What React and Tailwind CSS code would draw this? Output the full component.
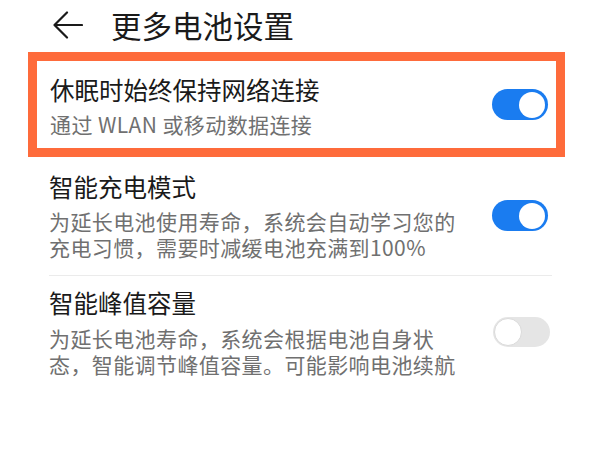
const font = { fontFamily: '"Noto Sans CJK SC", "Noto Sans", sans-serif' }

const Toggle = ({ on }) => {
    if (on) {
        return (
            <div className="w-[56px] h-[31px] rounded-full bg-[#1a7cf0] flex items-center justify-end pr-[3px] shrink-0">
                <div className="w-[26px] h-[26px] rounded-full bg-white"></div>
            </div>
        )
    }
    return (
        <div className="w-[57px] h-[30px] rounded-full bg-[#e5e5e5] flex items-center justify-start pl-[1px] shrink-0">
            <div className="w-[28px] h-[28px] rounded-full bg-white border border-[#dadada]"></div>
        </div>
    )
}

const App = () => {
    return (
        <div className="w-[600px] h-[450px] bg-white overflow-hidden" style={font}>
            {/* Header */}
            <div className="flex items-center h-[50px] pl-[52px]">
                <svg width="31" height="28" viewBox="0 0 31 28" fill="none">
                    <path d="M30 14H2.5M15 1.5L2.5 14L15 26.5" stroke="#1a1a1a" strokeWidth="2.2" strokeLinecap="round" strokeLinejoin="round" />
                </svg>
                <div className="ml-[28px] text-[30.5px] leading-[40px] text-[#1a1a1a]">更多电池设置</div>
            </div>

            {/* Highlighted row */}
            <div className="ml-[28px] mr-[35px] mt-[2px] border-[9px] border-[#fe6b3b] h-[105px] flex items-center justify-between pl-[13px] pr-[8px]">
                <div className="flex flex-col pt-[2px]">
                    <div className="text-[24.5px] leading-[32px] text-[#1a1a1a]">休眠时始终保持网络连接</div>
                    <div className="mt-[5px] text-[21px] tracking-[0.4px] leading-[26px] text-[#707070]">通过 WLAN 或移动数据连接</div>
                </div>
                <Toggle on />
            </div>

            {/* Smart charging */}
            <div className="ml-[49px] mr-[48px] mt-[14px] pb-[15px] border-b border-[#ebebeb] flex items-center justify-between pr-[4px]">
                <div className="flex flex-col">
                    <div className="text-[24.5px] leading-[32px] text-[#1a1a1a]">智能充电模式</div>
                    <div className="mt-[5px] text-[21px] tracking-[0.4px] leading-[26px] text-[#707070]">
                        <div>为延长电池使用寿命，系统会自动学习您的</div>
                        <div>充电习惯，需要时减缓电池充满到100%</div>
                    </div>
                </div>
                <Toggle on />
            </div>

            {/* Smart peak capacity */}
            <div className="ml-[49px] mr-[48px] mt-[11px] flex items-center justify-between pr-[2px]">
                <div className="flex flex-col">
                    <div className="text-[24.5px] leading-[32px] text-[#1a1a1a]">智能峰值容量</div>
                    <div className="mt-[6px] text-[21px] tracking-[0.4px] leading-[26px] text-[#707070]">
                        <div>为延长电池寿命，系统会根据电池自身状</div>
                        <div>态，智能调节峰值容量。可能影响电池续航</div>
                    </div>
                </div>
                <Toggle on={false} />
            </div>
        </div>
    )
}

export default App
